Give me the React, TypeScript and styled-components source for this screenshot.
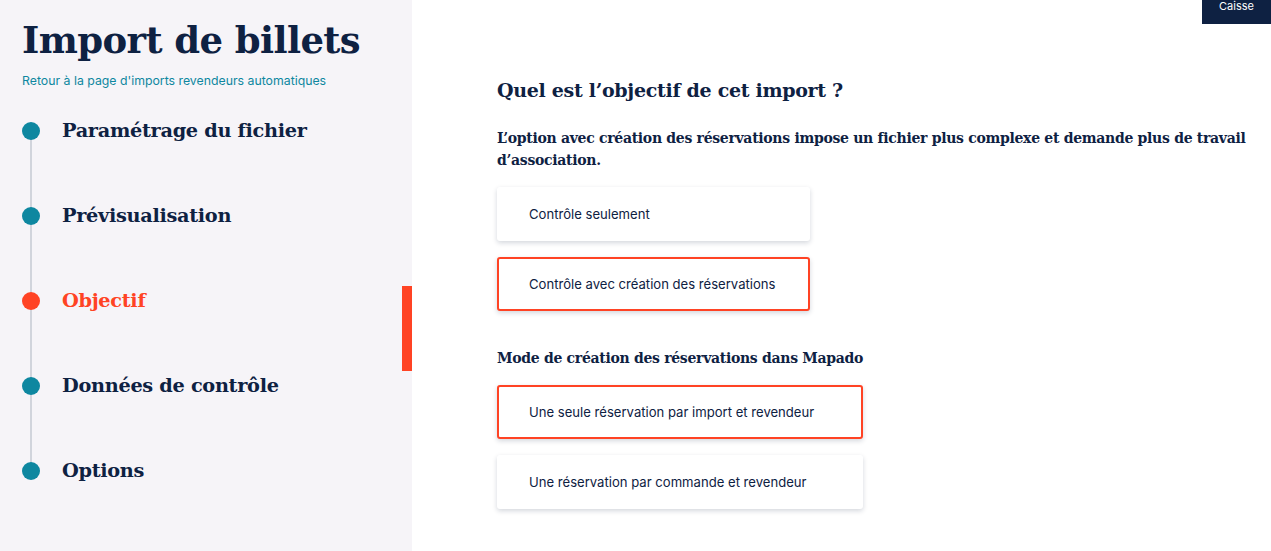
import styled, { createGlobalStyle } from "styled-components";

const GlobalStyle = createGlobalStyle`
    html, body {
        margin: 0;
        padding: 0;
        background: #ffffff;
    }
    body {
        font-family: "Inter", "Lato", sans-serif;
        color: #0e2142;
    }
`;

const NAVY = "#0e2142";
const TEAL = "#0e87a0";
const RED = "#ff4324";
const SERIF = `"DejaVu Serif", "Liberation Serif", serif`;
const SANS = `"Inter", "Lato", sans-serif`;

const Page = styled.div`
    display: flex;
    width: 1271px;
    height: 551px;
    overflow: hidden;
`;

const Sidebar = styled.aside`
    width: 412px;
    flex-shrink: 0;
    background: #f6f4f8;
    padding: 12px 0 0 0;
    box-sizing: border-box;
`;

const Title = styled.h1`
    margin: 0 0 0 22px;
    font-family: ${SERIF};
    font-size: 37px;
    line-height: 56px;
    font-weight: bold;
    letter-spacing: -0.6px;
    color: ${NAVY};
`;

const BackLink = styled.a`
    display: block;
    margin: 5px 0 0 22px;
    font-family: ${SANS};
    font-size: 12.3px;
    line-height: 16px;
    color: ${TEAL};
    text-decoration: none;
`;

const Steps = styled.ol`
    list-style: none;
    margin: 7px 0 0 0;
    padding: 0;
    position: relative;
`;

const Step = styled.li<{ $first?: boolean; $last?: boolean }>`
    position: relative;
    display: flex;
    align-items: center;
    height: 85px;
    margin-top: ${(p) => (p.$first ? "-8px" : "0")};

    &::before {
        content: "";
        position: absolute;
        left: 30px;
        width: 2px;
        background: #d1d4dc;
        top: ${(p) => (p.$first ? "50%" : "0")};
        bottom: ${(p) => (p.$last ? "50%" : "0")};
    }
`;

const Dot = styled.span<{ $active?: boolean }>`
    position: relative;
    width: 18px;
    height: 18px;
    border-radius: 50%;
    margin-left: 22px;
    background: ${(p) => (p.$active ? RED : TEAL)};
    z-index: 1;
`;

const StepLabel = styled.span<{ $active?: boolean }>`
    margin-left: 22px;
    font-family: ${SERIF};
    font-weight: bold;
    font-size: 19.3px;
    letter-spacing: -0.3px;
    color: ${(p) => (p.$active ? RED : NAVY)};
`;

const ActiveBar = styled.span`
    position: absolute;
    right: 0;
    top: 28px;
    height: 85px;
    width: 10px;
    background: ${RED};
`;

const Main = styled.main`
    position: relative;
    flex: 1;
    padding: 76px 0 0 85px;
    box-sizing: border-box;
`;

const CashButton = styled.button`
    position: absolute;
    top: 0;
    right: 0;
    width: 69px;
    height: 24px;
    border: none;
    background: ${NAVY};
    color: #ffffff;
    font-family: ${SANS};
    font-size: 11px;
    line-height: 12px;
    padding: 0;
    display: flex;
    justify-content: center;
    align-items: flex-start;
`;

const Question = styled.h2`
    margin: 0;
    font-family: ${SERIF};
    font-weight: bold;
    font-size: 19px;
    line-height: 28px;
    letter-spacing: -0.3px;
    color: ${NAVY};
`;

const Hint = styled.p`
    margin: 23px 0 0 0;
    font-family: ${SERIF};
    font-weight: bold;
    font-size: 14px;
    line-height: 22px;
    letter-spacing: -0.3px;
    color: ${NAVY};
`;

const SubTitle = styled.h3`
    margin: 36px 0 0 0;
    font-family: ${SERIF};
    font-weight: bold;
    font-size: 14px;
    line-height: 22px;
    letter-spacing: -0.3px;
    color: ${NAVY};
`;

const Choices = styled.div<{ $width: number }>`
    display: flex;
    flex-direction: column;
    gap: 16px;
    width: ${(p) => p.$width}px;
    margin-top: 16px;
`;

const Choice = styled.div<{ $selected?: boolean }>`
    display: flex;
    align-items: center;
    height: 54px;
    box-sizing: border-box;
    padding: 0 30px;
    background: #ffffff;
    border-radius: 3px;
    border: 2px solid ${(p) => (p.$selected ? RED : "transparent")};
    box-shadow: 0 2px 5px rgba(14, 33, 66, 0.18);
    font-family: ${SANS};
    font-size: 13.1px;
    color: ${NAVY};
`;

const steps = [
    "Paramétrage du fichier",
    "Prévisualisation",
    "Objectif",
    "Données de contrôle",
    "Options",
];

export default function App() {
    const active = 2;
    return (
        <>
            <GlobalStyle />
            <Page>
                <Sidebar>
                    <Title>Import de billets</Title>
                    <BackLink>Retour à la page d'imports revendeurs automatiques</BackLink>
                    <Steps>
                        {steps.map((label, i) => (
                            <Step key={label} $first={i === 0} $last={i === steps.length - 1}>
                                <Dot $active={i === active} />
                                <StepLabel $active={i === active}>{label}</StepLabel>
                                {i === active && <ActiveBar />}
                            </Step>
                        ))}
                    </Steps>
                </Sidebar>
                <Main>
                    <CashButton>Caisse</CashButton>
                    <Question>Quel est l’objectif de cet import ?</Question>
                    <Hint>
                        L’option avec création des réservations impose un fichier plus complexe et demande plus de travail
                        d’association.
                    </Hint>
                    <Choices $width={313}>
                        <Choice>Contrôle seulement</Choice>
                        <Choice $selected>Contrôle avec création des réservations</Choice>
                    </Choices>
                    <SubTitle>Mode de création des réservations dans Mapado</SubTitle>
                    <Choices $width={366}>
                        <Choice $selected>Une seule réservation par import et revendeur</Choice>
                        <Choice>Une réservation par commande et revendeur</Choice>
                    </Choices>
                </Main>
            </Page>
        </>
    );
}
